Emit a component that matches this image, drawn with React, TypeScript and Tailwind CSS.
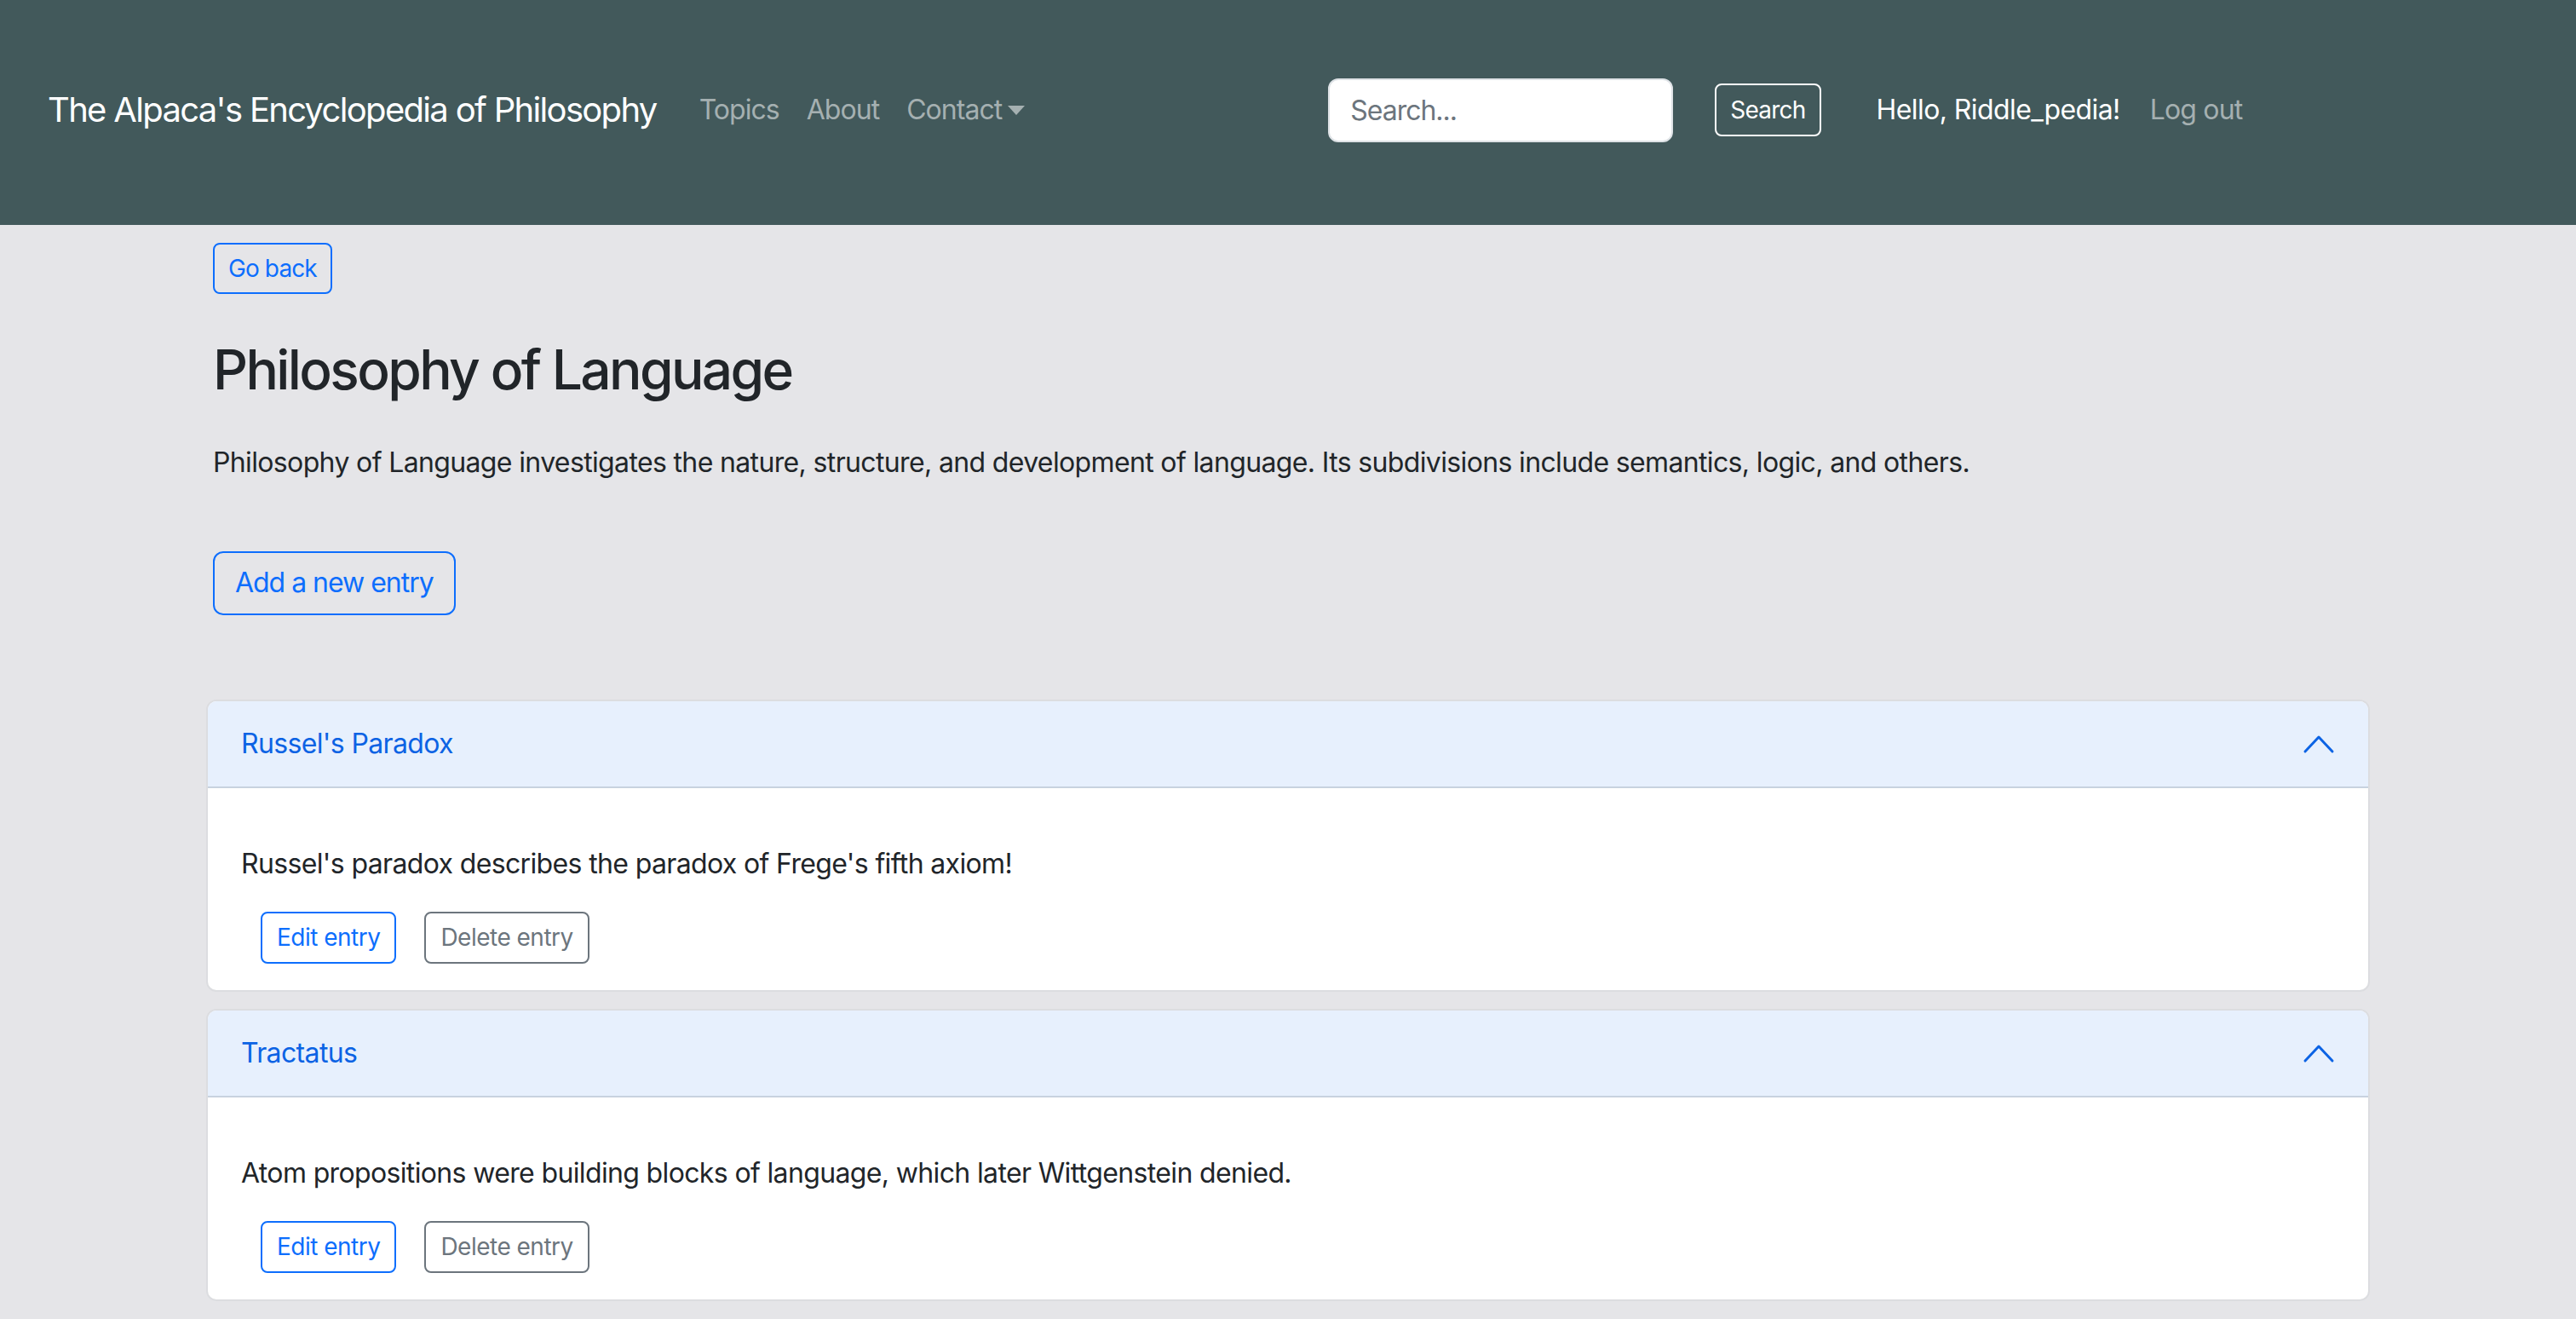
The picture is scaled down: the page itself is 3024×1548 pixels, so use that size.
import { useState } from "react";

type Entry = {
  id: number;
  title: string;
  body: string;
};

const entries: Entry[] = [
  { id: 1, title: "Russel's Paradox", body: "Russel's paradox describes the paradox of Frege's fifth axiom!" },
  { id: 2, title: "Tractatus", body: "Atom propositions were building blocks of language, which later Wittgenstein denied." },
];

function Chevron({ open }: { open: boolean }) {
  return (
    <svg
      width="40"
      height="40"
      viewBox="0 0 40 40"
      fill="none"
      className={open ? "" : "rotate-180"}
    >
      <path d="M4 29 L20 12 L36 29" stroke="#0c63e4" strokeWidth="3" strokeLinecap="round" strokeLinejoin="round" />
    </svg>
  );
}

function App() {
  const [open, setOpen] = useState<Record<number, boolean>>({ 1: true, 2: true });

  return (
    <div className="min-h-screen bg-[#e5e5e8] font-['Inter','Liberation_Sans',sans-serif] tracking-[-0.040em] text-[#212529]">
      {/* Navbar */}
      <nav className="h-[264px] bg-[#42595b] flex items-center pl-[56px] pb-[6px]">
        <a className="text-[40px] text-white tracking-[-0.042em] whitespace-nowrap">
          The Alpaca's Encyclopedia of Philosophy
        </a>
        <div className="flex items-center ml-[34px] text-[32px] text-[#a5b0b1] tracking-[-0.030em]">
          <a className="px-[16px]">Topics</a>
          <a className="px-[16px]">About</a>
          <a className="px-[16px] flex items-center">
            Contact
            <span className="ml-[7px] w-0 h-0 border-l-[10px] border-r-[10px] border-t-[11px] border-l-transparent border-r-transparent border-t-[#a5b0b1]" />
          </a>
        </div>

        <form className="flex items-center ml-[340px]" onSubmit={(e) => e.preventDefault()}>
          <input
            placeholder="Search..."
            className="w-[405px] h-[75px] bg-white rounded-[12px] border-2 border-[#dee2e6] px-[24px] text-[32px] tracking-[-0.032em] text-[#212529] placeholder:text-[#6c757d] outline-none"
          />
          <button className="ml-[49px] h-[62px] px-[16px] border-2 border-white rounded-[8px] text-white text-[28px] tracking-[-0.028em]">
            Search
          </button>
        </form>

        <span className="ml-[65px] text-[32px] text-white whitespace-nowrap tracking-[-0.018em]">Hello, Riddle_pedia!</span>
        <a className="ml-[35px] text-[32px] text-[#a5b0b1] whitespace-nowrap tracking-[-0.026em]">Log out</a>
      </nav>

      {/* Content */}
      <main className="w-[2540px] mx-auto">
        <div className="pl-[8px]">
          <button className="mt-[21px] h-[60px] px-[16px] border-2 border-[#0d6efd] rounded-[8px] text-[#0d6efd] text-[28px] tracking-[-0.032em]">
            Go back
          </button>
          <h1 className="mt-[51px] text-[64px] font-medium leading-[1.2] tracking-[-0.041em]">Philosophy of Language</h1>
          <p className="mt-[46px] text-[32px] leading-[48px]">
            Philosophy of Language investigates the nature, structure, and development of language. Its subdivisions include semantics, logic, and others.
          </p>
          <button className="mt-[80px] h-[75px] px-[24px] border-2 border-[#0d6efd] rounded-[12px] text-[#0d6efd] text-[32px] tracking-[-0.032em]">
            Add a new entry
          </button>
        </div>

        <div className="mt-[99px] flex flex-col gap-[20px]">
          {entries.map((entry) => (
            <div key={entry.id} className="bg-white rounded-[12px] border-2 border-[#dcdde0] overflow-hidden">
              <button
                onClick={() => setOpen({ ...open, [entry.id]: !open[entry.id] })}
                className="w-full h-[102px] flex items-center justify-between pl-[39px] pr-[38px] bg-[#e7f0fd] border-b-2 border-[#c8d2df] text-[32px] text-[#0c63e4]"
              >
                <span>{entry.title}</span>
                <Chevron open={!!open[entry.id]} />
              </button>
              {open[entry.id] && (
                <div className="pl-[39px] pt-[65px] pb-[31px]">
                  <p className="text-[32px] leading-[48px]">{entry.body}</p>
                  <div className="mt-[32px] ml-[23px] flex gap-[33px] tracking-[-0.032em]">
                    <button className="h-[61px] px-[17px] border-2 border-[#0d6efd] rounded-[8px] text-[#0d6efd] text-[28px]">
                      Edit entry
                    </button>
                    <button className="h-[61px] px-[17px] border-2 border-[#6c757d] rounded-[8px] text-[#6c757d] text-[28px]">
                      Delete entry
                    </button>
                  </div>
                </div>
              )}
            </div>
          ))}
        </div>
      </main>
    </div>
  );
}

export default App;
